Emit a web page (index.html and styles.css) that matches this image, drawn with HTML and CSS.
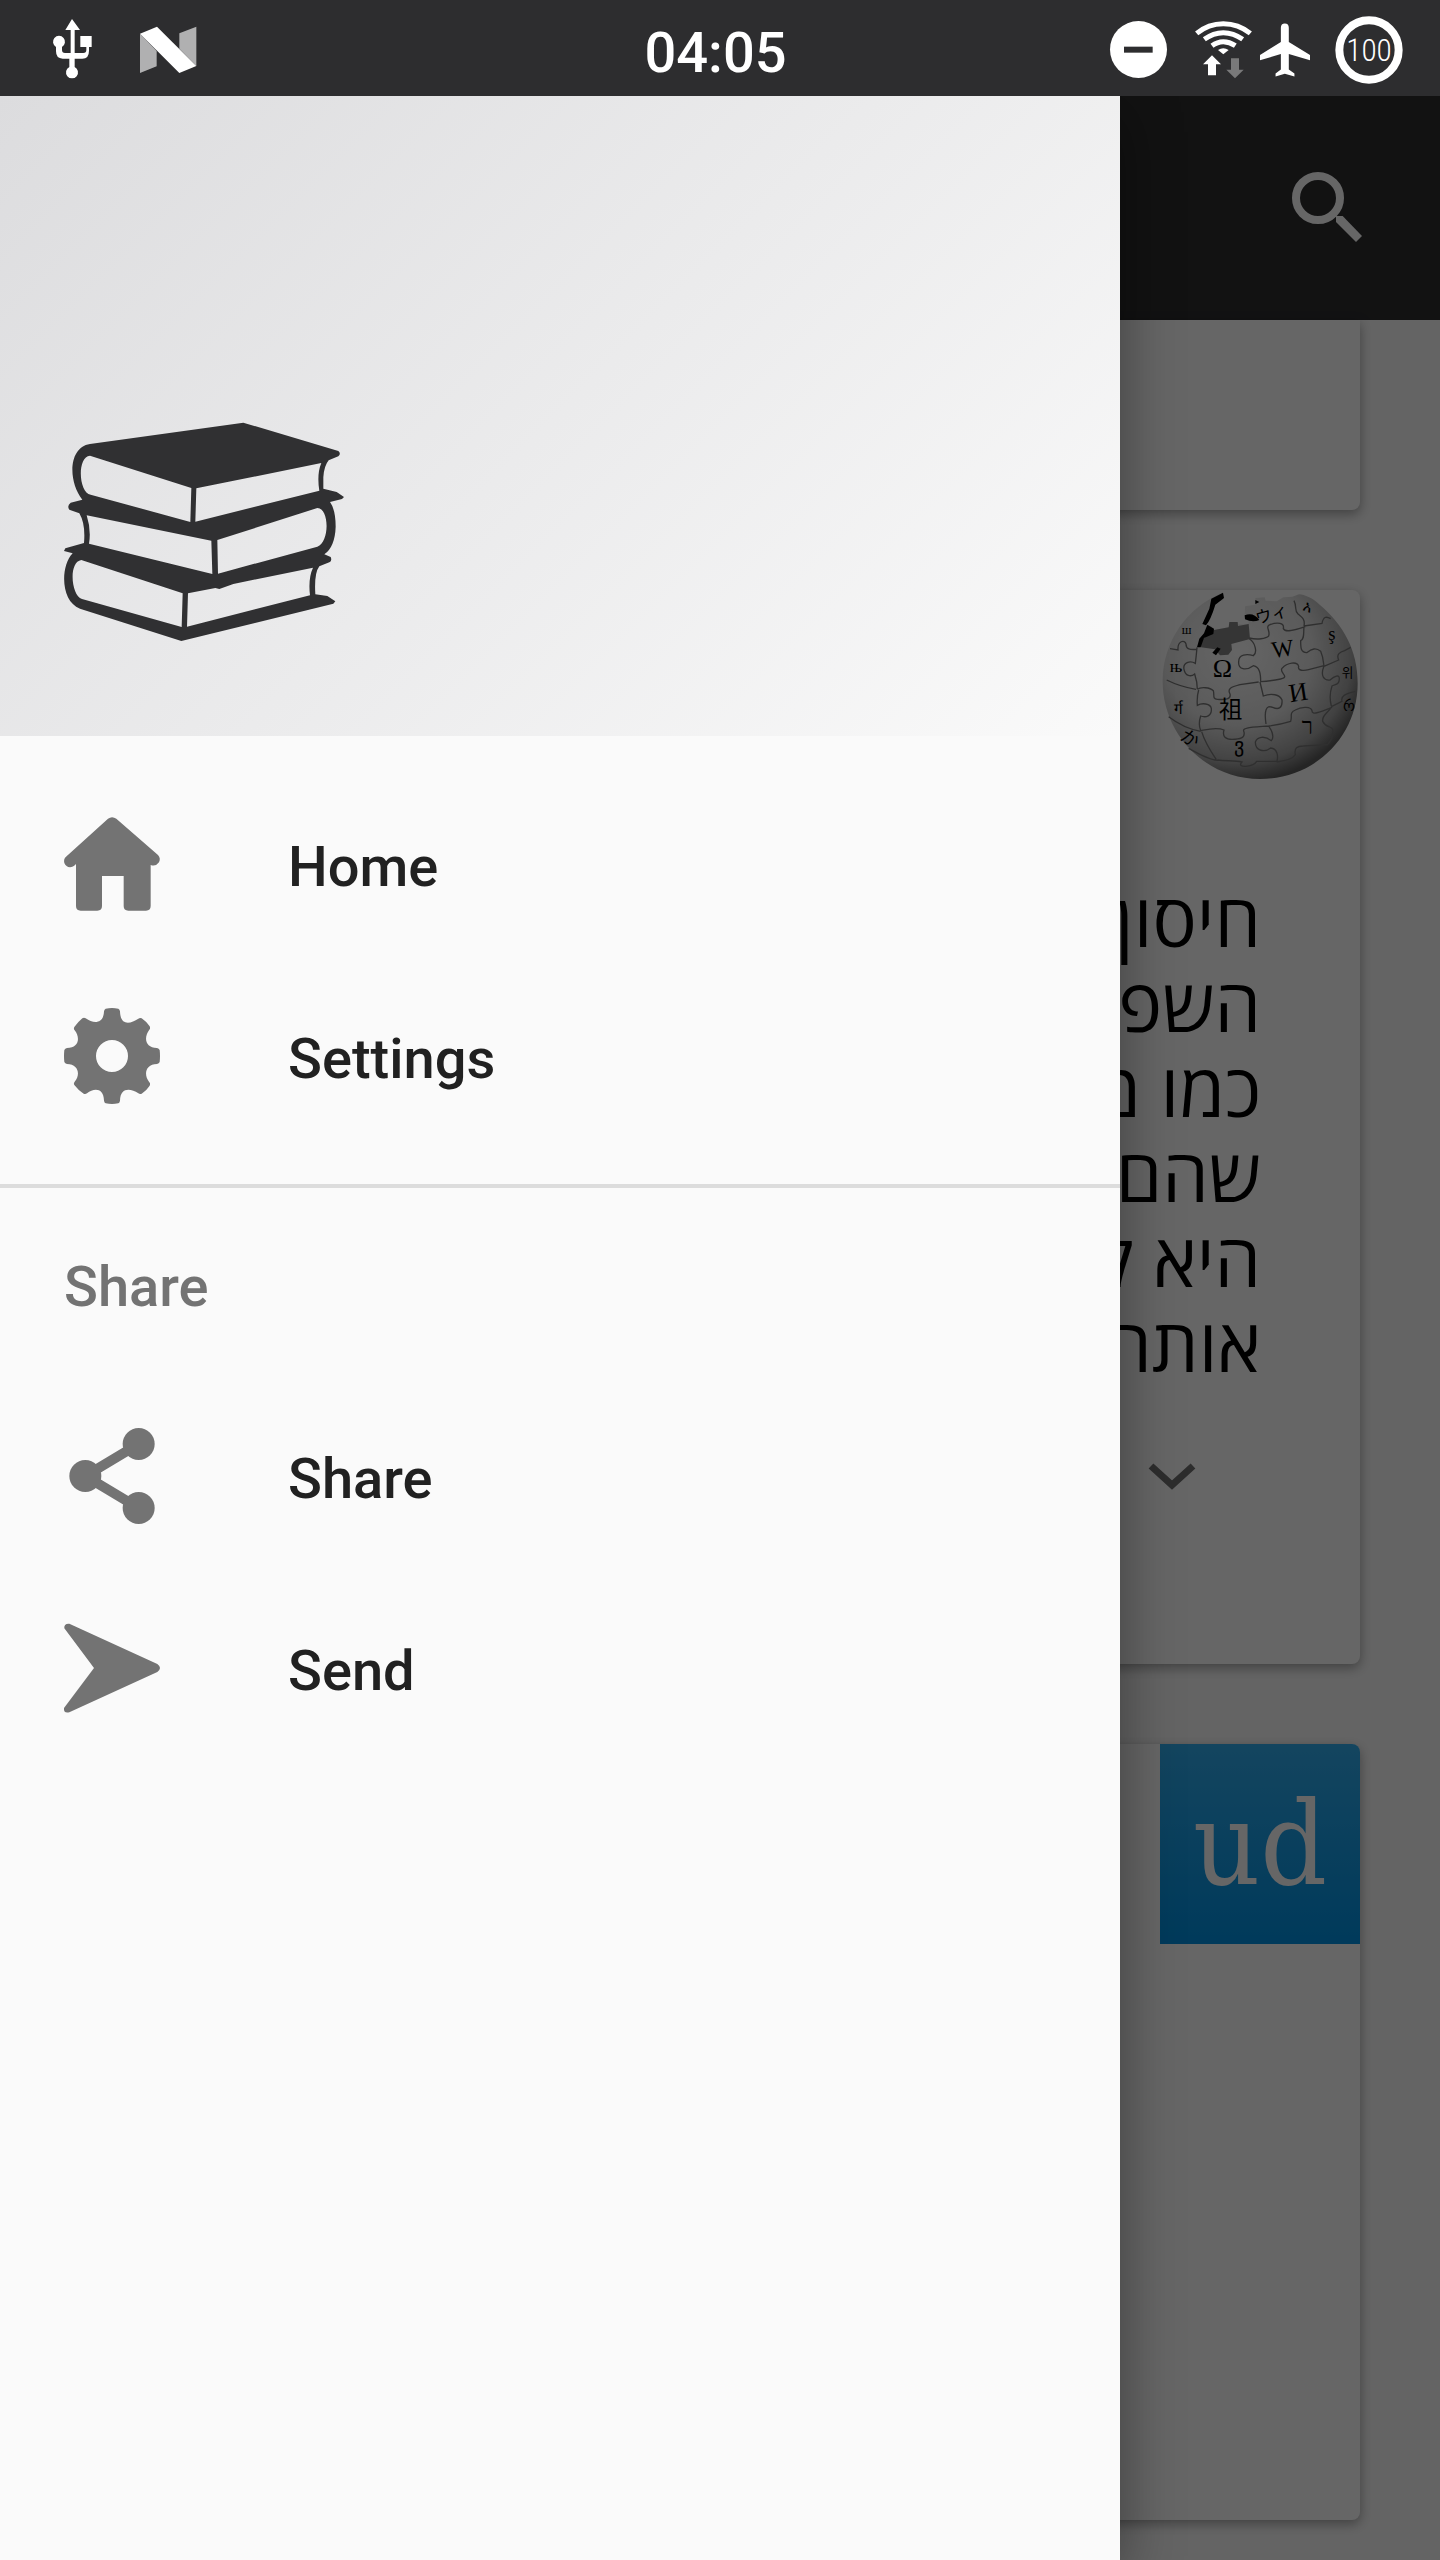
FILE: index.html
```html
<!DOCTYPE html>
<html lang="en">
<head>
<meta charset="utf-8">
<meta name="viewport" content="width=device-width, initial-scale=1">
<title>Home</title>
<link rel="stylesheet" href="styles.css">
</head>
<body>
<div class="screen">
  <header class="status">
    <div class="status-group status-left">
      <svg class="status-icon" viewBox="144 72 144 144" aria-label="USB">
        <path d="M216 57l24 33h-16v69h26q9 0 9-9v-9h-18v-33h34v33h-8v11q0 24-20 24h-23v25a18 18 0 1 1-16 0v-25h-20q-20 0-20-22v-13a18 18 0 1 1 18 0v9q0 9 9 9h17V90h-16z" fill="#fff"/>
      </svg>
      <svg class="status-icon" viewBox="432 72 144 144" aria-label="Android N">
        <path d="M420 101l50 52v46l-50 20zM538 100l51-20v118l-51-52z" fill="#b0b0b1"/>
        <path d="M420 101l51-21 118 118-51 21z" fill="#fff"/>
      </svg>
    </div>
    <time class="clock">04:05</time>
    <div class="status-group status-right">
      <svg class="dnd" viewBox="89 64 171 171" aria-label="Do not disturb"><circle cx="174.500" cy="149.500" r="85.500" fill="#fff"/><path d="M131 141h86v18h-86z" fill="#2d2d2f"/></svg>
      <svg class="wifi" viewBox="345 62 171 174" aria-label="Wi-Fi">
        <g fill="none" stroke="#fff" stroke-width="15"><path d="M350 99Q385 70 430 70T511 99"/><path d="M373 117Q400 97 430 97T488 117"/><path d="M396 136Q412 124 430 124T466 136"/></g>
        <path d="M414 149q16-11 32 0l-16 13z" fill="#fff"/>
        <path d="M396 165l27 27h-15v33h-24v-33h-15z" fill="#fff"/>
        <path d="M453 174h24v34h14l-26 26-26-26h14z" fill="#79797a"/>
      </svg>
      <svg class="plane" viewBox="540 62 151 174" aria-label="Airplane mode"><path d="M603 82q0-13 12-13t12 13v43l64 39v16l-64-19v47l17 12v9l-29-8-28 8v-9l16-12v-47l-63 19v-16l63-39z" fill="#fff"/></svg>
      <svg class="battery" viewBox="765 47 204 204" aria-label="Battery 100 percent"><circle cx="867" cy="149" r="89" fill="none" stroke="#fff" stroke-width="24"/><text x="867" y="183" text-anchor="middle" class="battery-text">100</text></svg>
    </div>
  </header>

  <div class="stage">
    <main class="app">
      <div class="appbar">
        <button class="icon-button" type="button" aria-label="Search">
          <svg class="search-icon" viewBox="636 516 210 210"><circle cx="714" cy="594" r="66" fill="none" stroke="#fff" stroke-width="24"/><path d="M768 648h20l58 60-18 18-60-60z" fill="#fff"/></svg>
        </button>
      </div>
      <div class="feed">
        <article class="card card-first"></article>
        <article class="card card-wiki">
          <svg class="thumb" viewBox="120 60 600 600" aria-label="Wikipedia">
            <defs>
              <radialGradient id="ball" cx="38%" cy="32%" r="70%"><stop offset="0" stop-color="#fdfdfd"/><stop offset=".55" stop-color="#e2e2e2"/><stop offset=".85" stop-color="#a4a4a4"/><stop offset="1" stop-color="#5c5c5c"/></radialGradient>
            </defs>
            <path d="M309 68C200 110 130 215 128 330C126 490 255 627 420 627S713 500 713 340C713 240 670 165 600 105C575 82 555 75 537 73L517 80L490 82L470 94L437 92L434 82L406 84V104L375 109L374 142L388 152L384 162H353V156H332L326 172L282 180L275 168L254 164Q275 135 285 100L309 90Z" fill="url(#ball)"/>
            <path d="M240 214L282 180L326 172L328 156H353L354 168L386 162L390 207L334 222L336 240L325 254L300 256L285 238L243 232Z" fill="#858585"/>
            <path d="M274 86L309 68L312 84L286 104Q272 150 258 166L247 162L268 116Z M262 164L282 176L280 192L252 204L242 232L231 232L238 206L252 190Z M292 232L302 236L288 256L277 248Z M374 136Q400 125 418 150Q398 158 375 148Z M406 90L418 96L406 102Z"/>
            <g fill="none" stroke="#777" stroke-width="4">
              <path d="M231 232q-2 24-5 48c-16-10-38-2-34 18s20 24 32 14q8 24 8 46M232 358c10-8 38-6 48 4c4 14-4 24 12 26c24 2 42 0 38-16c-10-18 8-22 30-28l56-8M388 207c16 8 26 40 12 50c-20-6-44-4-44 18c-2 24 22 28 44 12c20 4 22 26 22 48M422 335q30-2 60-8c30-6-6-20 4-32c16-18 46-22 50-6c-4 14 16 14 30 10l46-12M388 204c24 6 50 2 58-6c6-16-12-28 4-34c22-8 44-6 40 12c6 12 30 6 66-6M552 170c-2 20 2 36-10 42c0 22 0 34 18 36c16-12 28-16 42-4c8 18 8 30 10 46M612 288c-12 30 0 44 18 42c14-12 28-18 28-4c0 20-14 16-22 22q-10 30-2 60M420 336l10 42c24-10 50-4 56 12c2 24-10 30-28 22c-20-8-26 10-20 50M236 360q-6 20-4 46c14-8 40-6 42 10c2 22-16 28-32 22q-8 24 0 44M242 482c20-4 48-12 70-2c-6 20 6 28 24 28c24 0 40-4 36-22c-8-14 20-14 74-18M446 468q34-4 66-14c6-18-6-24 14-34c20-12 48-10 50 2c0 14 20 6 60-10M446 468q20 30 8 44c-20-16-42-12-48 4c0 28 28 32 46 18c20 2 24 24 18 42M245 485q10 34 44 84M292 570c28 4 50 0 74 6c-20 20 36 16 44-2l60 0M470 576c22-4 46-6 56-22c-4-20 6-26 24-26l74-4M522 92c10 20 0 30 12 40s22 16 18 36M552 168l54-8c4-20 12-22 26-14M610 290l46-20c-8-18 4-24 18-28l18-10M634 410l32-16c-4-16 8-22 40-30M636 410c-16 22-30 26-28 44c12 22 26 12 30 24q4 24-14 44M140 330q40 20 88 28M146 440q44 34 96 44M150 236l24 4c-2-28 20-32 24-18c0 16 12 18 32 16M206 535q60 34 86 36"/>
            </g>
            <g class="glyphs" text-anchor="middle">
              <text x="307" y="322" font-size="78">Ω</text><text x="488" y="260" font-size="70" transform="rotate(-8 488 238)">W</text><text x="535" y="393" font-size="78" transform="rotate(-9 535 368)">И</text><text x="332" y="444" font-size="70">祖</text><text x="455" y="150" font-size="50" transform="rotate(-16 455 132)">ウィ</text><text x="636" y="210" font-size="56">ş</text><text x="683" y="320" font-size="38">위</text><text x="200" y="192" font-size="38">ш</text><text x="168" y="306" font-size="52">њ</text><text x="175" y="432" font-size="46">र्ग</text><text x="208" y="524" font-size="54" transform="rotate(32 208 508)">か</text><text x="356" y="546" font-size="60">ვ</text><text x="562" y="492" font-size="68">ר</text><text x="562" y="126" font-size="46" transform="rotate(20 562 112)">አ</text><text x="688" y="424" font-size="46">რ</text>
            </g>
          </svg>
          <p class="excerpt" lang="he" dir="rtl">חיסון<br>השפ<br>כמו מ<br>שהם<br>היא ק<br>אותה</p>
          <button class="expand" type="button" aria-label="Expand">
            <svg class="chevron" viewBox="0 0 48 28"><path d="M3 4l21 19 21-19" fill="none" stroke="#707070" stroke-width="7"/></svg>
          </button>
        </article>
        <article class="card card-ud"><div class="thumb ud">ud</div></article>
      </div>
    </main>
    <div class="scrim"></div>

    <aside class="drawer">
      <div class="drawer-head">
        <svg class="books" viewBox="72 66 840 660" aria-label="Books">
          <path fill="#303032" fill-rule="evenodd" d="M150 132L610 68L895 153Q904 161 895 169L866 181Q852 198 850 232V266L890 276L912 291L906 297L870 306Q887 330 887 380Q885 440 853 463L872 471Q877 483 868 487L838 499Q822 520 826 583L862 588L886 604L880 611L424 723L120 626C62 605 60 500 98 460L72 453L76 445L132 429Q137 372 118 340L88 329Q80 317 92 308L127 299C84 245 84 142 150 132ZM150 167C110 170 116 280 152 284L451 366L454 264ZM469 265L466 365L838 272Q830 222 844 189ZM140 346Q154 390 147 431L517 522L514 422ZM532 420L534 521L832 440C870 425 868 325 832 324ZM124 480C84 486 94 588 126 597L425 681L428 580ZM444 580L441 680L810 586Q804 535 819 503L580 552L538 567L526 564Z"/>
        </svg>
      </div>
      <nav class="menu">
        <a class="item" href="#home">
          <svg class="item-icon" viewBox="72 78 288 288"><path d="M204 86q12-9 25 0L354 195q9 10 3 22-10 14-25 8V348q0 14-14 14h-53q-14 0-14-14V258h-65v90q0 14-14 14h-50q-14 0-14-14V222c-14 16-30 10-35-3q-3-12 5-19z"/></svg>
          <span class="label">Home</span></a>
        <a class="item" href="#settings">
          <svg class="item-icon" viewBox="72 654 288 288"><path fill-rule="evenodd" d="M197 656q19-4 38 0 4 2 5 8C241 708 271 702 295 686q5-4 10-1 16 11 24 24 3 6-1 10C310 744 316 773 351 774q6 1 8 6 2 18 0 36-2 5-8 6C316 823 310 854 328 877q4 4 1 10-8 13-24 24-5 3-10-1C271 894 241 892 240 932q-1 7-5 8-19 4-38 0-4-1-5-8C191 892 161 894 141 910q-5 4-10 1-16-10-28-26-3-5 1-10C122 854 116 823 81 822q-6-1-8-6-2-18 0-36 2-5 8-6C116 773 122 744 104 721q-4-5-1-10 12-16 24-26 5-3 10 0C161 702 191 702 192 664q1-6 5-8zM216 750a48 48 0 1 0 0 96 48 48 0 0 0 0-96z"/></svg>
          <span class="label">Settings</span></a>
        <h2 class="subhead"><span class="label">Share</span></h2>
        <a class="item" href="#share">
          <svg class="item-icon" viewBox="72 774 288 288"><path d="M296 822L136 918l160 96" fill="none" stroke="#737373" stroke-width="30"/><circle cx="136" cy="918" r="48"/><circle cx="296" cy="822" r="48"/><circle cx="296" cy="1014" r="48"/></svg>
          <span class="label">Share</span></a>
        <a class="item" href="#send">
          <svg class="item-icon" viewBox="72 1350 288 288"><path d="M88 1361L352 1482q16 12 0 24L88 1627q-18 4-16-13L162 1494 73 1375q-2-15 15-14z"/></svg>
          <span class="label">Send</span></a>
      </nav>
    </aside>
  </div>
</div>
</body>
</html>
```
FILE: styles.css
```css
* {
  box-sizing: border-box;
}

body {
  margin: 0;
  font-family: Roboto, "Liberation Sans", sans-serif;
  background: #fafafa;
}

svg {
  display: block;
  overflow: visible;
}

.screen {
  display: flex;
  flex-direction: column;
  min-height: 100vh;
}

/* Status bar */
.status {
  display: grid;
  grid-template-columns: 1fr auto 1fr;
  align-items: center;
  height: 96px;
  padding: 0 37px 0 48px;
  background: #2d2d2f;
  color: #fff;
}

.status-group {
  display: flex;
  align-items: center;
}

.status-left {
  gap: 48px;
}

.status-right {
  justify-content: flex-end;
  padding-top: 3px;
}

.status-icon {
  width: 48px;
  height: 48px;
}

.clock {
  padding-top: 10px;
  margin-right: 20px;
  font-size: 56px;
  font-weight: 500;
  line-height: 64px;
}

.dnd {
  width: 57px;
  height: 57px;
  margin-right: 28px;
}

.wifi {
  width: 57px;
  height: 58px;
  margin-right: 8px;
}

.plane {
  width: 50px;
  height: 58px;
  margin-right: 25px;
}

.battery {
  width: 68px;
  height: 68px;
}

.battery-text {
  font-family: "Roboto Condensed", Roboto, sans-serif;
  font-size: 94px;
  font-weight: 300;
  fill: #fff;
}

/* Page under the drawer */
.stage {
  position: relative;
  flex: 1;
  overflow: hidden;
}

.app {
  display: flex;
  flex-direction: column;
}

.appbar {
  display: flex;
  align-items: center;
  justify-content: flex-end;
  height: 224px;
  padding: 0 78px 2px;
  background: #2d2d2f;
}

.icon-button,
.expand {
  padding: 0;
  border: 0;
  background: none;
}

.search-icon {
  width: 70px;
  height: 70px;
}

.feed {
  display: flex;
  flex-direction: column;
  gap: 80px;
  padding: 0 80px 40px;
}

.card {
  display: flex;
  flex-direction: column;
  align-items: flex-end;
  border-radius: 8px;
  background: #fff;
  box-shadow: 0 4px 12px rgba(0, 0, 0, .35);
}

.card-first {
  min-height: 190px;
  border-radius: 0 0 8px 8px;
}

.card-wiki {
  min-height: 1074px;
}

.card-ud {
  min-height: 776px;
}

.thumb {
  width: 200px;
  height: 200px;
}

.glyphs {
  font-family: "Liberation Serif", "Noto Sans CJK JP", "Noto Sans CJK KR", serif;
}

.excerpt {
  margin: 86px 99px 0;
  font-family: "Open Sans", "Noto Sans", sans-serif;
  font-size: 74px;
  font-weight: 500;
  line-height: 85px;
  color: #000;
}

.expand {
  margin: 76px 164px 0;
}

.chevron {
  width: 48px;
  height: 28px;
}

.ud {
  display: flex;
  align-items: center;
  justify-content: center;
  border-top-right-radius: 8px;
  background: linear-gradient(#32adee, #0091e3);
  color: #fff;
  font-family: "DejaVu Serif Condensed", "DejaVu Serif", serif;
  font-size: 116px;
  line-height: 192px;
}

.scrim {
  position: absolute;
  inset: 0;
  background: rgba(0, 0, 0, .6);
}

/* Navigation drawer */
.drawer {
  position: absolute;
  inset: 0 320px 0 0;
  background: #fafafa;
  box-shadow: 0 16px 56px rgba(0, 0, 0, .4);
}

.drawer-head {
  display: flex;
  align-items: flex-end;
  height: 640px;
  padding: 0 64px 94px;
  background: linear-gradient(135deg, #dcdcde, #fafafa);
}

.books {
  width: 280px;
  height: 220px;
}

.menu {
  display: flex;
  flex-direction: column;
  padding: 32px 0;
}

.item {
  display: flex;
  align-items: center;
  gap: 128px;
  height: 192px;
  padding: 0 64px;
  color: #212121;
  font-size: 56px;
  font-weight: 500;
  line-height: 64px;
  text-decoration: none;
}

.label {
  padding-top: 6px;
}

.item-icon {
  width: 96px;
  height: 96px;
  fill: #737373;
}

.subhead {
  display: flex;
  align-items: center;
  height: 196px;
  margin: 32px 0 0;
  padding: 0 64px;
  border-top: 4px solid #dcdcdc;
  color: #737373;
  font-size: 56px;
  font-weight: 500;
  line-height: 64px;
}
```
